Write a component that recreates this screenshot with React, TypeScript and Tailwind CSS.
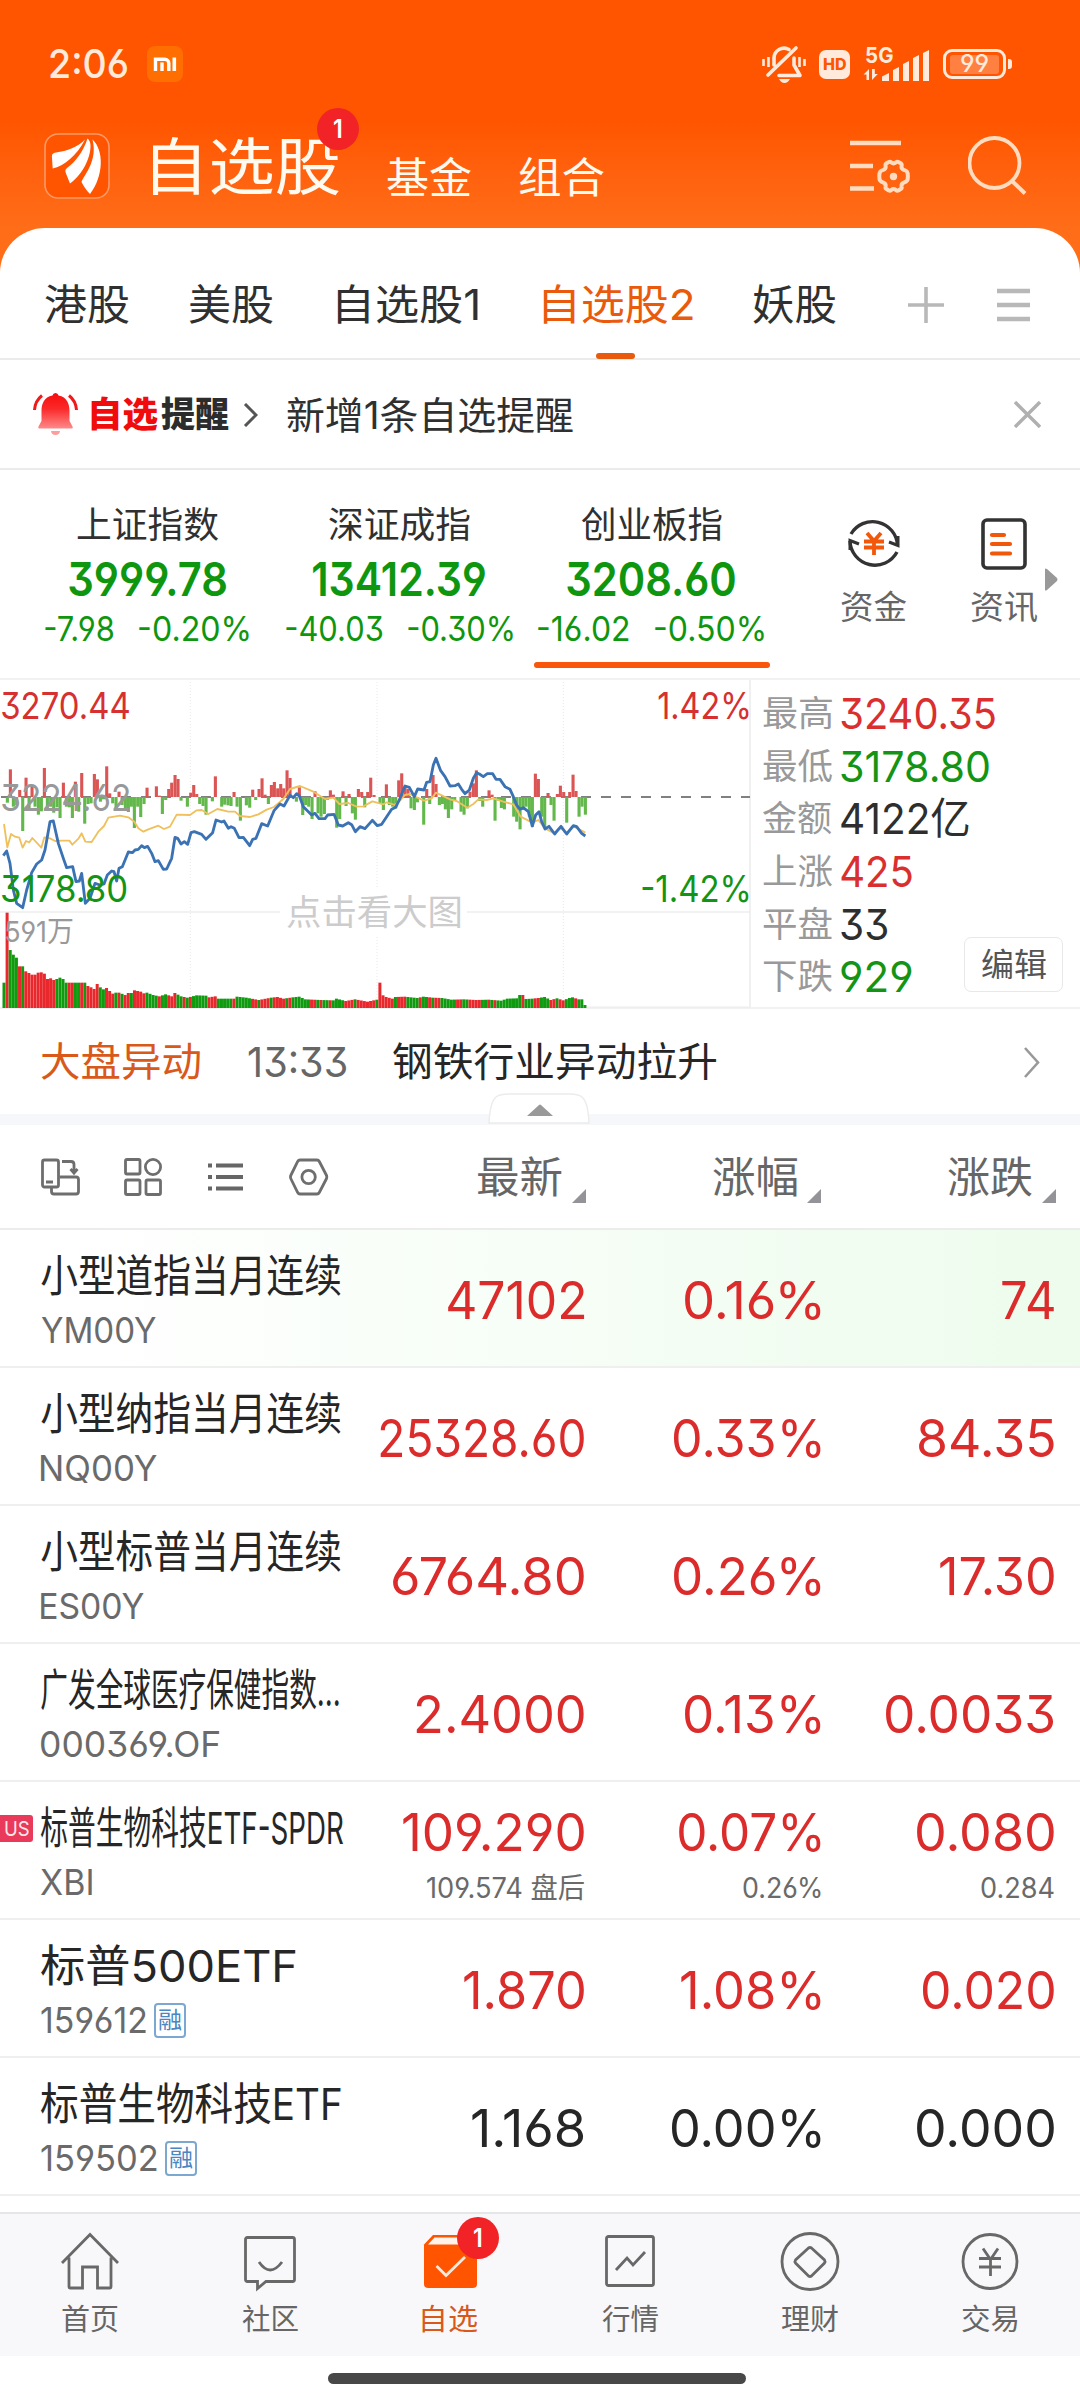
import { useLayoutEffect, useRef, useState } from "react";
import type { ReactNode } from "react";

/* Text condensed or stretched so that its glyphs fill exactly `w` pixels. */
function Fit({ w, children, className = "" }: { w: number; children: string; className?: string }) {
  const ref = useRef<HTMLSpanElement>(null);
  const [transform, setTransform] = useState("none");
  useLayoutEffect(() => {
    const el = ref.current;
    const ctx = document.createElement("canvas").getContext("2d");
    if (!el || !ctx) return;
    const cs = getComputedStyle(el);
    ctx.font = `${cs.fontWeight} ${cs.fontSize} ${cs.fontFamily}`;
    const m = ctx.measureText(children);
    const left = -m.actualBoundingBoxLeft;
    const right = m.width - m.actualBoundingBoxRight;
    const advance = parseFloat(cs.width) || el.offsetWidth;
    const s = w / (advance - left - right);
    setTransform(`translateX(${-left * s}px) scaleX(${s})`);
  }, [w, children]);
  return (
    <span className={`block shrink-0 leading-none whitespace-nowrap ${className}`} style={{ width: w }}>
      <span ref={ref} className="inline-block origin-left leading-none" style={{ transform }}>
        {children}
      </span>
    </span>
  );
}

function Icon({ w, h, className = "", children }: { w: number; h: number; className?: string; children: ReactNode }) {
  return (
    <svg width={w} height={h} viewBox={`0 0 ${w} ${h}`} fill="none" className={`block shrink-0 ${className}`}>
      {children}
    </svg>
  );
}

function StatusBar() {
  return (
    <div className="flex h-[128px] items-center pl-[50px] text-[#ffeadb]">
      <Fit w={77} className="text-[40px] font-medium">2:06</Fit>
      <Icon w={36} h={36} className="ml-5">
        <rect width="36" height="36" rx="8" fill="#ff6e00" />
        <path d="M8.5 25V13.2h9.3a4 4 0 0 1 4 4V25M15 16.5V25" stroke="#fff" strokeWidth="3.4" />
        <path d="M27.3 11.5V25" stroke="#fff" strokeWidth="3.6" />
      </Icon>
      <Icon w={44} h={40} className="ml-[579px]">
        <path d="M12 21V14a10 10 0 0 1 15-8.500M32 14v7l6 10.500H17M6 31 34 4" stroke="#ffeadb" strokeWidth="3.6" strokeLinecap="round" strokeLinejoin="round" />
        <path d="M17 35h11q-2.200 4-5.500 4t-5.500-4Z" fill="#ffeadb" />
        <path d="M1.500 15v7M6.500 13v10M37.500 13v10M42.500 15v7" stroke="#ffeadb" strokeWidth="2.600" />
      </Icon>
      <div className="ml-[13px] flex h-[29px] w-[31px] items-center justify-center rounded-[7px] bg-[#ffeadb] text-[#ff5500]">
        <Fit w={23} className="text-[16px] font-extrabold">HD</Fit>
      </div>
      <div className="relative ml-[13px] h-[34px] w-[66px]">
        <Fit w={27} className="absolute top-[-3px] left-[3px] text-[22px] font-bold">5G</Fit>
        <Icon w={66} h={34}>
          <path d="M6 33V22L0.500 27.500h3V33ZM9 22v11l5.800-6h-3V22Z" fill="#ffeadb" />
          <path d="M19 34v-4.500L26 26v8ZM30 34V23l6-3v14ZM40 34V17l6-3v20ZM50 34V11l6-3v26ZM60 34V6l6-3v31Z" fill="#ffeadb" />
        </Icon>
      </div>
      <div className="ml-[14px] flex h-[30px] w-[63px] items-center justify-center rounded-[9px] border-[3px] border-[#ffeadb]">
        <div className="flex h-[19px] w-[49px] items-center justify-center rounded-[3px] bg-[#ff8040]">
          <Fit w={27} className="text-[24px] font-medium">99</Fit>
        </div>
      </div>
      <div className="ml-[2px] h-[10px] w-[4px] rounded-r-[3px] bg-[#ffeadb]" />
    </div>
  );
}

function Header() {
  return (
    <div className="flex h-[146px] items-start pl-[44px] text-[#fffaf0]">
      <Icon w={66} h={66} className="mt-[5px]">
        <rect x="1" y="1" width="64" height="64" rx="13" fill="#ff5500" stroke="#ff9a66" strokeWidth="1.600" />
        <path d="M41 6.500C34 14 23 18 12 19.500 8 20 7.800 22 8 25L8.700 35.500C20 33 33 22.500 41 6.500Z" fill="#fff" />
        <path d="M43.500 5.500C39 19 31.500 29 23 35c-2 1.500-2 3-1 5.500l4 10C37 43 47 26 46.500 12 46.300 9 45 6.500 43.500 5.500Z" fill="#fff" />
        <path d="M48.500 6.500C60 17 60 43 46 61c-3-3-6.500-8-8.500-12C40 42 54 28 48.500 6.500Z" fill="#fff" />
      </Icon>
      <div className="relative mt-[9px] ml-[43px]">
        <Fit w={186} className="text-[62px]">自选股</Fit>
        <div className="absolute top-[-29px] left-[164px] flex h-[42px] w-[42px] items-center justify-center rounded-full bg-[#f12326] text-white">
          <Fit w={8} className="text-[26px] font-semibold">1</Fit>
        </div>
      </div>
      <Fit w={84} className="mt-[29px] ml-[48px] text-[42px]">基金</Fit>
      <Fit w={85} className="mt-[29px] ml-[48px] text-[42px]">组合</Fit>
      <Icon w={60} h={54} className="mt-[12px] ml-[246px]">
        <path d="M0 3h51M0 26h23M0 48.500h24" stroke="#ffdcc0" strokeWidth="4.600" />
        <path d="M37.500 22.800q1.200-.8 2.500.4 2.300 1.900 4.600 0 1.300-1.200 2.500-.4l2.300 1.300q1.300.8.900 2.500-.5 3 2.200 4 2.600.8 3.300 2 .8 1.200.8 4.400t-.8 4.400q-.7 1.200-3.300 2-2.700 1-2.200 4 .4 1.700-.9 2.500l-2.300 1.300q-1.200.8-2.500-.4-2.300-1.900-4.600 0-1.300 1.200-2.500.4l-2.300-1.300q-1.300-.8-.9-2.500.5-3-2.200-4-2.600-.8-3.300-2-.8-1.200-.8-4.400t.8-4.400q.7-1.200 3.300-2 2.700-1 2.200-4-.4-1.700.9-2.500Z" transform="translate(1.300 -.8)" stroke="#ffdcc0" strokeWidth="4" />
        <circle cx="43.500" cy="36.500" r="3.700" fill="#ffdcc0" />
      </Icon>
      <Icon w={60} h={60} className="mt-[8px] ml-[58px]">
        <circle cx="26.500" cy="27" r="25" stroke="#ffdcc0" strokeWidth="3.800" />
        <path d="m44 45 13 12.500" stroke="#ffdcc0" strokeWidth="4" />
      </Icon>
    </div>
  );
}

function Tabs() {
  return (
    <div className="flex h-[132px] items-center border-b-2 border-[#ebebeb] pt-[23px] pl-[45px] text-[42px] text-[#303030]">
      <Fit w={84}>港股</Fit>
      <Fit w={84} className="ml-[60px]">美股</Fit>
      <Fit w={141} className="ml-[64px]">自选股1</Fit>
      <div className="relative ml-[65px] text-[#ea5a0c]">
        <Fit w={150}>自选股2</Fit>
        <div className="absolute top-[69px] left-[53px] h-[6px] w-[39px] rounded-[3px] bg-[#ea5a0c]" />
      </div>
      <Fit w={83} className="ml-[60px]">妖股</Fit>
      <Icon w={36} h={36} className="ml-[72px]">
        <path d="M18 0v36M0 18h36" stroke="#b8b8b8" strokeWidth="3.600" />
      </Icon>
      <Icon w={33} h={34} className="ml-[53px]">
        <path d="M0 3h33M0 17h33M0 31h33" stroke="#b8b8b8" strokeWidth="4.400" />
      </Icon>
    </div>
  );
}

function Alert() {
  return (
    <div className="flex h-[110px] items-center border-b-2 border-[#ebebeb] pt-px pl-[33px]">
      <Icon w={45} h={43}>
        <defs>
          <linearGradient id="bell" x1="0" y1="0" x2="0" y2="1">
            <stop offset="0" stopColor="#f80c0c" />
            <stop offset="0.45" stopColor="#fa2a2a" />
            <stop offset="1" stopColor="#ff8a8a" />
          </linearGradient>
        </defs>
        <path d="M22.500 0q2.500 0 3 2.500C34 4 36.500 11 36.500 18v10l3 5.500q1 2-1.500 2H7q-2.500 0-1.500-2l3-5.500V18c0-7 2.500-14 11-15.500Q20 0 22.500 0Z" fill="url(#bell)" />
        <path d="M18 38h9q-.5 4-4.500 4T18 38Z" fill="#ff9c9c" />
        <path d="M9 2.500Q2 8 1.500 17M36 2.500Q43 8 43.500 17" stroke="#f01a1a" strokeWidth="3" />
      </Icon>
      <Fit w={67} className="ml-[13px] text-[35px] font-black text-[#f00c0c]">自选</Fit>
      <Fit w={68} className="ml-[3px] text-[35px] font-black text-[#2c2c2c]">提醒</Fit>
      <Icon w={15} h={24} className="ml-[14px]">
        <path d="m2 1 11 11L2 23" stroke="#555" strokeWidth="3" />
      </Icon>
      <Fit w={286} className="ml-[29px] text-[38px] text-[#303030]">新增1条自选提醒</Fit>
      <Icon w={27} h={27} className="ml-[441px]">
        <path d="m1 1 25 25M26 1 1 26" stroke="#b0b0b0" strokeWidth="3.400" />
      </Icon>
    </div>
  );
}

function IndexCard({ name, value, vw, diff, dw, pct, pw, active }: {
  name: string; value: string; vw: number; diff: string; dw: number; pct: string; pw: number; active?: boolean;
}) {
  return (
    <div className="relative flex w-[252px] flex-col items-center pt-[37px] text-[#0f960f]">
      <Fit w={141} className="text-[36px] text-[#303030]">{name}</Fit>
      <Fit w={vw} className="mt-[12px] text-[47px] font-semibold">{value}</Fit>
      <div className="mt-[10px] flex gap-[26px]">
        <Fit w={dw} className="text-[34px]">{diff}</Fit>
        <Fit w={pw} className="text-[34px]">{pct}</Fit>
      </div>
      {active && <div className="absolute top-[192px] left-[9px] h-[6px] w-[236px] rounded-[3px] bg-[#f9560b]" />}
    </div>
  );
}

function Indices() {
  return (
    <div className="flex h-[210px] border-b-2 border-[#f2f2f2] pl-[21px]">
      <IndexCard name="上证指数" value="3999.78" vw={157} diff="-7.98" dw={68} pct="-0.20%" pw={110} />
      <IndexCard name="深证成指" value="13412.39" vw={172} diff="-40.03" dw={96} pct="-0.30%" pw={105} />
      <IndexCard name="创业板指" value="3208.60" vw={168} diff="-16.02" dw={91} pct="-0.50%" pw={109} active />
      <div className="ml-[64px] flex w-[66px] flex-col items-center pt-[46px]">
        <Icon w={54} h={54}>
          <path d="M4 18A25 25 0 0 1 50.500 29M50 36A25 25 0 0 1 3 25" stroke="#333" strokeWidth="3.400" />
          <path d="M42 26l9 3.500V20M12 28 3 24.500V34" stroke="#333" strokeWidth="3" />
          <path d="m20 17 7 8 7-8M17 25.500h20M17 31.500h20M27 25v14" stroke="#f2580c" strokeWidth="3.800" />
        </Icon>
        <Fit w={66} className="mt-[21px] text-[33px] text-[#666]">资金</Fit>
      </div>
      <div className="ml-[64px] flex w-[66px] flex-col items-center pt-[48px]">
        <Icon w={46} h={52}>
          <rect x="2" y="2" width="42" height="48" rx="4" stroke="#333" strokeWidth="3.600" />
          <path d="M11 17h12M11 26h18M11 35.500h18" stroke="#f2580c" strokeWidth="4.200" strokeLinecap="round" />
        </Icon>
        <Fit w={66} className="mt-[21px] text-[33px] text-[#666]">资讯</Fit>
      </div>
      <Icon w={14} h={24} className="mt-[98px] ml-[7px]">
        <path d="M1 1q0-1 2 0l10 9q1 1 0 3L3 22q-2 1-2 0Z" fill="#999" />
      </Icon>
    </div>
  );
}

type Pt = [number, number];

const PRICE: Pt[] = [[10,557],[20,543],[30,580],[40,660],[50,700],[68,713],[80,660],[95,608],[110,582],[125,570],[135,540],[150,455],[160,453],[175,520],[190,565],[200,593],[218,590],[228,635],[238,633],[245,610],[256,700],[270,685],[285,640],[300,645],[312,642],[322,615],[335,603],[342,605],[350,633],[357,595],[367,590],[385,546],[397,548],[405,540],[415,538],[425,527],[433,533],[443,529],[455,550],[465,575],[475,572],[490,598],[500,597],[515,565],[525,502],[533,505],[543,522],[553,515],[563,523],[573,488],[583,485],[605,493],[618,508],[638,488],[648,450],[665,456],[672,453],[685,475],[693,470],[703,475],[717,503],[730,502],[749,527],[758,508],[768,505],[785,461],[803,468],[822,422],[840,402],[852,408],[870,376],[880,383],[890,371],[898,378],[910,410],[935,435],[945,430],[957,446],[975,446],[983,435],[1002,433],[1015,465],[1028,468],[1045,458],[1055,464],[1066,485],[1080,470],[1095,476],[1117,451],[1132,467],[1145,463],[1175,418],[1187,412],[1200,385],[1215,348],[1228,352],[1243,380],[1253,357],[1272,360],[1280,337],[1290,335],[1300,285],[1308,265],[1322,302],[1335,320],[1350,348],[1365,347],[1375,342],[1385,358],[1395,371],[1408,360],[1420,325],[1430,308],[1438,312],[1450,320],[1462,311],[1478,311],[1488,328],[1500,328],[1515,350],[1530,358],[1540,380],[1550,405],[1560,418],[1570,413],[1585,425],[1597,468],[1607,435],[1617,425],[1625,455],[1635,477],[1647,469],[1664,492],[1675,478],[1683,469],[1700,492],[1720,467],[1730,470],[1745,490],[1756,498]];
const AVERAGE: Pt[] = [[12,462],[22,532],[33,492],[45,500],[58,503],[68,533],[78,513],[88,517],[97,504],[124,533],[133,502],[150,505],[165,513],[185,512],[208,512],[217,524],[236,505],[245,490],[256,515],[275,516],[295,485],[312,468],[325,443],[360,437],[385,442],[403,455],[415,475],[430,485],[445,478],[475,467],[492,477],[510,470],[530,434],[570,435],[590,421],[605,420],[625,432],[652,417],[685,425],[705,425],[720,438],[750,441],[775,433],[800,419],[822,411],[850,387],[870,357],[900,348],[940,365],[975,387],[1000,383],[1018,402],[1045,399],[1070,410],[1090,409],[1117,394],[1150,403],[1160,397],[1185,405],[1200,392],[1215,375],[1230,372],[1245,380],[1272,392],[1295,385],[1308,368],[1350,388],[1370,393],[1402,413],[1420,402],[1435,388],[1460,390],[1480,385],[1510,395],[1540,403],[1562,440],[1597,458],[1615,450],[1635,475],[1664,490],[1683,475],[1700,490],[1722,470],[1756,488]];
const MOMENTUM: Pt[] = [[31,298],[59,360],[78,323],[96,350],[133,294],[190,338],[226,335],[245,309],[283,312],[292,328],[320,289],[329,370],[357,365],[441,353],[469,349],[478,377],[506,357],[515,338],[525,315],[534,327],[572,368],[581,345],[590,372],[646,319],[702,366],[758,359],[777,357],[786,325],[795,374],[814,345],[823,336],[833,355],[842,342],[851,355],[861,301],[870,324],[898,352],[945,364],[991,361],[1000,374],[1029,364],[1047,372],[1075,357],[1085,366],[1103,366],[1112,323],[1122,375],[1159,343],[1196,331],[1205,310],[1215,350],[1224,357],[1280,357],[1299,315],[1308,342],[1410,365],[1420,340],[1429,301],[1467,361],[1476,374],[1606,311],[1615,327],[1644,369],[1672,372],[1681,347],[1691,366],[1709,366],[1719,314],[1728,363],
[22,398],[40,410],[50,405],[68,483],[87,415],[105,410],[115,434],[124,424],[142,415],[152,410],[161,428],[171,412],[180,444],[199,410],[208,412],[217,444],[236,425],[254,461],[264,402],[273,400],[301,395],[310,388],[338,400],[348,415],[366,405],[376,418],[385,426],[394,410],[403,474],[413,410],[422,441],[432,402],[487,432],[497,390],[543,392],[562,410],[599,402],[609,408],[618,434],[637,394],[665,410],[674,404],[684,406],[693,408],[711,410],[721,452],[739,406],[749,413],[767,390],[805,402],[889,395],[908,435],[917,405],[926,410],[936,447],[954,430],[963,440],[973,432],[982,390],[1010,473],[1019,447],[1038,408],[1057,430],[1066,449],[1094,412],[1140,400],[1150,420],[1168,405],[1178,410],[1187,415],[1233,415],[1243,420],[1252,397],[1271,464],[1289,402],[1318,405],[1327,402],[1336,418],[1345,444],[1355,418],[1364,392],[1383,425],[1392,434],[1402,415],[1439,393],[1448,410],[1485,452],[1495,392],[1504,414],[1513,418],[1541,440],[1550,455],[1560,478],[1569,420],[1578,410],[1588,440],[1597,470],[1625,440],[1634,474],[1653,405],[1662,452],[1700,458],[1737,440],[1746,410],[1756,434]];

/* Tops of the volume bars at chosen minutes; the ones between are interpolated. */
const VOLUME: Pt[] = [[0,938],[1,728],[2,840],[3,854],[4,863],[5,889],[6,889],[7,904],[8,909],[9,914],[10,914],[11,908],[12,907],[13,911],[14,927],[15,925],[16,930],[17,927],[18,923],[19,927],[20,938],[26,938],[27,948],[28,952],[29,957],[30,942],[31,952],[32,958],[33,954],[34,963],[35,971],[36,968],[37,968],[39,975],[40,969],[41,969],[42,961],[44,965],[45,970],[46,968],[48,975],[50,979],[52,973],[54,979],[55,969],[57,979],[59,983],[62,976],[65,977],[66,982],[68,979],[69,986],[74,986],[75,980],[78,983],[82,990],[86,983],[88,981],[90,986],[93,982],[95,980],[97,988],[102,990],[106,991],[107,986],[110,993],[113,988],[117,995],[120,989],[121,938],[122,976],[123,981],[125,986],[126,981],[129,980],[133,984],[135,980],[138,983],[141,984],[144,989],[148,988],[152,990],[156,989],[160,992],[162,986],[165,985],[166,975],[167,975],[168,987],[170,986],[172,984],[174,981],[176,990],[178,985],[180,991],[182,984],[183,982],[185,988],[186,988],[187,1005]];
const VOLUME_COLORS = [
  "grgggrgrrrrrrrrrrggggrrggrgrrrrggrrrgrgrr",
  "grrrrggggrggrrrggrgrgggggrrrgggggrggggg",
  "rrgrrrgrrrrgrggggggrrgrggrggggrrrgrrrrrrg",
  "rrrrrgrrrggggrggrgrrgggggrrggrrrrggrgrggggggggr",
  "gggrrgggrrgrrgggrgggg",
].join("");

function volumeTop(i: number) {
  const k = VOLUME.findIndex(([n]) => n >= i);
  const [n1, t1] = VOLUME[k];
  if (n1 === i || k === 0) return t1;
  const [n0, t0] = VOLUME[k - 1];
  return t0 + ((t1 - t0) * (i - n0)) / (n1 - n0);
}

const toPoints = (pts: Pt[]) => pts.map((p) => p.join(",")).join(" ");

function Chart() {
  return (
    <div className="relative h-[328px] w-[751px] shrink-0 border-r-2 border-[#f0f0f0]">
      <svg width="750" height="328" viewBox="0 30 2250 984" fill="none" className="block">
        <path d="M571 36V1014M1131 36V1014M1690 36V1014" stroke="#e8e8e8" strokeWidth="3" strokeDasharray="3 6" />
        <path d="M0 726H2250" stroke="#eeeeee" strokeWidth="5" />
        <path d="M1760 1012H2250" stroke="#eeeeee" strokeWidth="5" />
        <path d="M3 381H2250" stroke="#808080" strokeWidth="6" strokeDasharray="30 30" />
        {MOMENTUM.map(([x, y], i) => (
          <rect key={i} x={x - 4.5} y={Math.min(y, 381)} width="9.300" height={Math.abs(y - 381)} fill={y < 381 ? "#dc5555" : "#62b84a"} />
        ))}
        <polyline points={toPoints(AVERAGE)} stroke="#efc05c" strokeWidth="5.500" strokeLinejoin="round" />
        <polyline points={toPoints(PRICE)} stroke="#3a72b4" strokeWidth="8.500" strokeLinejoin="round" />
        {Array.from({ length: 188 }, (_, i) => (
          <rect key={i} x={7.5 + i * 9.32} y={volumeTop(i)} width="9" height={1014 - volumeTop(i)} fill={VOLUME_COLORS[i] === "r" ? "#e8282c" : "#0f9a0f"} />
        ))}
      </svg>
      <Fit w={127} className="absolute top-[7px] left-[2px] text-[37px] text-[#d63030]">3270.44</Fit>
      <Fit w={127} className="absolute top-[99px] left-[2px] text-[37px] text-[#999]">3224.62</Fit>
      <Fit w={125} className="absolute top-[190px] left-[2px] text-[37px] text-[#149414]">3178.80</Fit>
      <Fit w={91} className="absolute top-[7px] left-[658px] text-[37px] text-[#d63030]">1.42%</Fit>
      <Fit w={107} className="absolute top-[190px] left-[642px] text-[37px] text-[#149414]">-1.42%</Fit>
      <Fit w={67} className="absolute top-[237px] left-[6px] text-[29px] text-[#999]">591万</Fit>
      <div className="absolute top-[208px] left-[280px] flex h-[48px] w-[187px] items-center justify-center bg-white">
        <Fit w={174} className="text-[35px] text-[#ccc]">点击看大图</Fit>
      </div>
    </div>
  );
}

const STATS: { label: string; value: string; w: number; color: string }[] = [
  { label: "最高", value: "3240.35", w: 154, color: "text-[#d9302f]" },
  { label: "最低", value: "3178.80", w: 148, color: "text-[#149414]" },
  { label: "金额", value: "4122亿", w: 128, color: "text-[#2e2e2e]" },
  { label: "上涨", value: "425", w: 71, color: "text-[#d9302f]" },
  { label: "平盘", value: "33", w: 46, color: "text-[#2e2e2e]" },
  { label: "下跌", value: "929", w: 71, color: "text-[#149414]" },
];

function Market() {
  return (
    <div className="flex h-[329px] border-b-2 border-[#f2f2f2]">
      <Chart />
      <div className="relative flex flex-col pt-[7px] pl-[12px]">
        {STATS.map((s) => (
          <div key={s.label} className="flex h-[52.700px] items-center gap-[9px]">
            <Fit w={69} className="text-[35px] text-[#999]">{s.label}</Fit>
            <Fit w={s.w} className={`text-[43px] ${s.color}`}>{s.value}</Fit>
          </div>
        ))}
        <div className="absolute top-[257px] left-[213px] flex h-[55px] w-[99px] items-center justify-center rounded-[7px] border border-[#e8e8e8] bg-white">
          <Fit w={64} className="text-[32px] text-[#555]">编辑</Fit>
        </div>
      </div>
    </div>
  );
}

function News() {
  return (
    <div className="relative flex h-[116px] items-center border-b-[11px] border-[#f6f7fa] pt-px pl-[41px]">
      <Fit w={159} className="text-[40px] text-[#d9591a]">大盘异动</Fit>
      <Fit w={98} className="ml-[48px] text-[41px] text-[#666]">13:33</Fit>
      <Fit w={324} className="ml-[47px] text-[40px] text-[#262626]">钢铁行业异动拉升</Fit>
      <Icon w={17} h={31} className="ml-[307px]">
        <path d="m1 1 13 14.500L1 30" stroke="#999" strokeWidth="2.600" />
      </Icon>
      <Icon w={104} h={31} className="absolute top-[84px] left-[488px]">
        <path d="M1 30Q2 9 8 4q4-3 12-3h62q8 0 12 3 6 5 7 26Z" fill="#fff" stroke="#ececec" strokeWidth="1.500" />
        <path d="M39 23 51 12q1-1 2 0l12 11Z" fill="#999" />
      </Icon>
    </div>
  );
}

function SortLabel({ children, className = "" }: { children: string; className?: string }) {
  return (
    <div className={`flex items-center ${className}`}>
      <Fit w={84} className="mt-[2px] text-[43px] text-[#666]">{children}</Fit>
      <Icon w={14} h={14} className="mt-[38px] ml-[10px]">
        <path d="M14 0v14H0Z" fill="#949498" />
      </Icon>
    </div>
  );
}

function TableHeader() {
  return (
    <div className="flex h-[105px] items-center border-b-2 border-[#ececec] pl-[41px]">
      <Icon w={39} h={38}>
        <g stroke="#6e6e6e" strokeWidth="2.800">
          <rect x="1.500" y="2" width="16" height="27" rx="2" />
          <path d="M5 24h7M21 3.500h9q3 0 3 3V14M29.500 11 33 15l3.500-4M18.500 19H35q2.500 0 2.500 2.500v12q0 2.500-2.500 2.500H13q-2.500 0-2.500-2.500V30" />
        </g>
      </Icon>
      <Icon w={38} h={38} className="ml-[44px]">
        <g stroke="#6e6e6e" strokeWidth="2.800">
          <rect x="1.500" y="1.500" width="14.500" height="14.500" rx="1.500" />
          <circle cx="29" cy="9" r="7.600" />
          <rect x="1.500" y="22" width="14.500" height="14.500" rx="1.500" />
          <rect x="22" y="22" width="14.500" height="14.500" rx="1.500" />
        </g>
      </Icon>
      <Icon w={36} h={30} className="ml-[46px]">
        <path d="M8 3.500h27M8 15h27M8 26.500h27M0 3.500h4M0 15h4M0 26.500h4" stroke="#666" strokeWidth="4" />
      </Icon>
      <Icon w={40} h={38} className="ml-[45px]">
        <path d="M11 2h17q1.500 0 2.300 1.500l7 13.500q1 2 0 4l-7 13.500Q29.500 36 28 36H11q-1.500 0-2.300-1.500L2 21q-1-2 0-4L8.700 3.500Q9.500 2 11 2Z" stroke="#6e6e6e" strokeWidth="2.800" />
        <circle cx="19.600" cy="19" r="6.700" stroke="#6e6e6e" strokeWidth="2.800" />
      </Icon>
      <SortLabel className="ml-[149px]">最新</SortLabel>
      <SortLabel className="ml-[127px]">涨幅</SortLabel>
      <SortLabel className="ml-[127px]">涨跌</SortLabel>
    </div>
  );
}

type Cell = [text: string, width: number, sub?: string, subWidth?: number];
interface Quote {
  name: string; nw: number; code: string; cw: number;
  cells: [Cell, Cell, Cell];
  flat?: boolean; lit?: boolean; us?: boolean; margin?: boolean;
}

const QUOTES: Quote[] = [
  { name: "小型道指当月连续", nw: 300, code: "YM00Y", cw: 115, cells: [["47102", 136], ["0.16%", 136], ["74", 52]], lit: true },
  { name: "小型纳指当月连续", nw: 300, code: "NQ00Y", cw: 116, cells: [["25328.60", 204], ["0.33%", 147], ["84.35", 135]] },
  { name: "小型标普当月连续", nw: 300, code: "ES00Y", cw: 103, cells: [["6764.80", 191], ["0.26%", 147], ["17.30", 114]] },
  { name: "广发全球医疗保健指数...", nw: 298, code: "000369.OF", cw: 178, cells: [["2.4000", 168], ["0.13%", 136], ["0.0033", 168]] },
  { name: "标普生物科技ETF-SPDR", nw: 302, code: "XBI", cw: 51, cells: [["109.290", 181, "109.574 盘后", 157], ["0.07%", 142, "0.26%", 78], ["0.080", 137, "0.284", 73]], us: true },
  { name: "标普500ETF", nw: 255, code: "159612", cw: 105, cells: [["1.870", 120], ["1.08%", 140], ["0.020", 131]], margin: true },
  { name: "标普生物科技ETF", nw: 300, code: "159502", cw: 116, cells: [["1.168", 112], ["0.00%", 149], ["0.000", 137]], margin: true, flat: true },
];

const COLUMNS = ["w-[240px]", "w-[237px]", "w-[233px]"];

function Row({ q }: { q: Quote }) {
  return (
    <div className={`relative flex h-[138px] border-b-2 border-[#efefef] ${q.lit ? "bg-linear-to-r from-white from-5% to-[#edfced]" : "bg-white"}`}>
      {q.us && (
        <div className="absolute top-[33px] left-0 flex h-[27px] w-[33px] items-center justify-center rounded-r-[3px] bg-[#e93a5c] pl-[1px] text-[#ffe6ea]">
          <Fit w={24} className="text-[20px]">US</Fit>
        </div>
      )}
      <div className="w-[303px] shrink-0 pl-[41px]">
        <Fit w={q.nw} className="mt-[24px] text-[44px] text-[#262626]">{q.name}</Fit>
        <div className="mt-[14px] flex items-center">
          <Fit w={q.cw} className="text-[36px] text-[#6a6a6a]">{q.code}</Fit>
          {q.margin && (
            <div className="-my-[2px] ml-[8px] flex h-[35px] w-[32px] items-center justify-center rounded-[4px] border-2 border-[#7ba7d0] text-[#4a86c0]">
              <Fit w={23} className="text-[23px]">融</Fit>
            </div>
          )}
        </div>
      </div>
      <div className={`ml-[41px] flex ${q.flat ? "text-[#262626]" : "text-[#db2b2b]"}`}>
        {q.cells.map(([text, w, sub, sw], i) => (
          <div key={i} className={`flex shrink-0 flex-col items-end ${COLUMNS[i]} ${sub ? "pt-[25px]" : "pt-[45px]"}`}>
            <Fit w={w} className="text-[52px]">{text}</Fit>
            {sub && sw && <Fit w={sw} className="mt-[15px] text-[28px] text-[#6a6a6a]">{sub}</Fit>}
          </div>
        ))}
      </div>
    </div>
  );
}

const NAV: { label: string; active?: boolean; icon: ReactNode }[] = [
  { label: "首页", icon: <path d="m2 33 28-28.500L58 33M9 27.500V57q0 1 1 1h12.500V37h15v21H50q1 0 1-1V27.500" /> },
  { label: "社区", icon: <path d="M7.500 7.500h45q2 0 2 2v40q0 2-2 2H26l-8.500 7v-7H7.500q-2 0-2-2v-40q0-2 2-2ZM19 32q11 16 23 0" /> },
  {
    label: "自选", active: true, icon: (
      <>
        <path d="M4 14.500 13 5h35l9 9.500V54q0 4-4 4H8q-4 0-4-4Z" fill="#ff5500" stroke="none" />
        <path d="m8 14.500 6.500-7h32l6.500 7Z" fill="#fff3ea" stroke="none" />
        <path d="M16.500 36 26 45.500 45 27" stroke="#ffe9dc" />
      </>
    ),
  },
  { label: "行情", icon: <><rect x="6.500" y="6.500" width="47" height="49" rx="2" /><path d="m16 40 11-12 6 7 12-13" /></> },
  { label: "理财", icon: <><circle cx="30" cy="31.500" r="28" /><path d="m28.500 18-13 12q-1 1.500 0 3l13 13q1.500 1 3 0l13-13q1-1.500 0-3l-13-12q-1.500-1-3 0Z" /></> },
  { label: "交易", icon: <><circle cx="30" cy="31.500" r="27" /><path d="m23 18.500 7.500 11 7.500-11M19 28.500h22M19 37h22M30.500 28v18" /></> },
];

function BottomNav() {
  return (
    <div className="relative flex h-[144px] border-t-2 border-[#e6e6e8] bg-[#f8f8fa]">
      {NAV.map((n) => (
        <div key={n.label} className="relative flex w-[180px] flex-col items-center pt-[16px]">
          <Icon w={60} h={62}>
            <g stroke="#686868" strokeWidth="2.800">{n.icon}</g>
          </Icon>
          <Fit w={56} className={`mt-[13px] text-[29px] ${n.active ? "text-[#d9591a]" : "text-[#666]"}`}>{n.label}</Fit>
          {n.active && (
            <div className="absolute top-[3px] left-[97px] flex h-[42px] w-[42px] items-center justify-center rounded-full bg-[#f12326] text-white">
              <Fit w={8} className="text-[26px] font-semibold">1</Fit>
            </div>
          )}
        </div>
      ))}
    </div>
  );
}

export default function App() {
  return (
    <div className="flex h-[2400px] w-[1080px] flex-col overflow-hidden bg-linear-to-b from-[#ff5500] from-[120px] to-[#ff6d18] to-[228px] font-['Inter','Noto_Sans_CJK_SC',sans-serif] [font-feature-settings:'cv03','cv04','cv09']">
      <StatusBar />
      <div className="h-[100px]"><Header /></div>
      <div className="flex flex-1 flex-col rounded-t-[45px] bg-white">
        <Tabs />
        <Alert />
        <Indices />
        <Market />
        <News />
        <TableHeader />
        <div className="h-[982px] shrink-0 overflow-hidden">
          {QUOTES.map((q) => <Row key={q.code} q={q} />)}
        </div>
        <BottomNav />
        <div className="flex justify-center pt-[17px] pr-[6px]">
          <div className="h-[11px] w-[418px] rounded-full bg-[#484848]" />
        </div>
      </div>
    </div>
  );
}
